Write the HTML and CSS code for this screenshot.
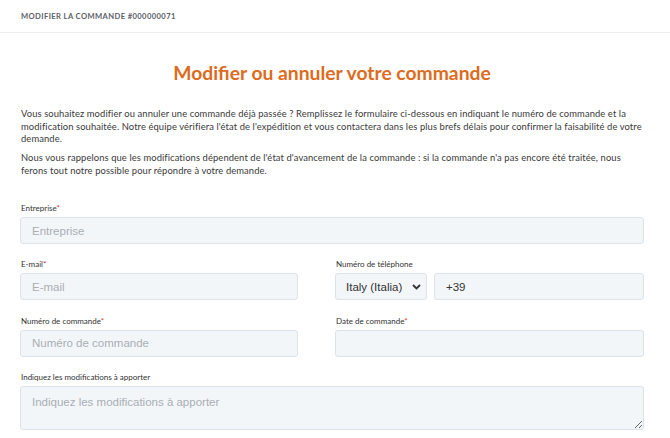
FILE: index.html
```html
<!DOCTYPE html>
<html>

<head>
    <title>Modifier la commande</title>
    <meta charset="utf-8">
    <meta name="viewport" content="width=device-width, initial-scale=1">
    <link rel="stylesheet" href="styles.css">
</head>

<body>
    <div class="topbar">MODIFIER LA COMMANDE #000000071</div>

    <div class="content">
        <h1 class="title">Modifier ou annuler votre commande</h1>

        <p class="intro">Vous souhaitez modifier ou annuler une commande déjà passée ? Remplissez le formulaire ci-dessous en indiquant le numéro de commande et la modification souhaitée. Notre équipe vérifiera l'état de l'expédition et vous contactera dans les plus brefs délais pour confirmer la faisabilité de votre demande.</p>
        <p class="intro">Nous vous rappelons que les modifications dépendent de l'état d'avancement de la commande : si la commande n'a pas encore été traitée, nous ferons tout notre possible pour répondre à votre demande.</p>

        <form class="form">
            <div class="field full">
                <label>Entreprise<span class="req">*</span></label>
                <input type="text" placeholder="Entreprise">
            </div>

            <div class="field">
                <label>E-mail<span class="req">*</span></label>
                <input type="text" placeholder="E-mail">
            </div>
            <div class="field">
                <label>Numéro de téléphone</label>
                <div class="phone">
                    <div class="country">
                        <span>Italy (Italia)</span>
                        <svg width="9" height="6" viewBox="0 0 9 6"><path d="M1 1l3.5 3.5L8 1" fill="none" stroke="#333" stroke-width="1.8"/></svg>
                    </div>
                    <input type="text" value="+39">
                </div>
            </div>

            <div class="field">
                <label>Numéro de commande<span class="req">*</span></label>
                <input type="text" placeholder="Numéro de commande">
            </div>
            <div class="field">
                <label>Date de commande<span class="req">*</span></label>
                <input type="text">
            </div>

            <div class="field full">
                <label>Indiquez les modifications à apporter</label>
                <textarea placeholder="Indiquez les modifications à apporter"></textarea>
            </div>
        </form>
    </div>
</body>

</html>
```

FILE: styles.css
```css
body {
    margin: 0;
    background-color: #FFFFFF;
    font-family: "Lato", "Noto Sans", sans-serif;
    color: #333333;
}

.topbar {
    height: 32px;
    line-height: 32px;
    padding-left: 21px;
    border-bottom: 1px solid #EEEEEE;
    font-size: 7.6px;
    font-weight: bold;
    letter-spacing: 0.4px;
    color: #5C6168;
}

.content {
    width: 624px;
    margin-left: 20px;
}

.title {
    margin: 28px 0 24px;
    text-align: center;
    font-size: 19.3px;
    font-weight: bold;
    color: #DD6B20;
}

.intro {
    margin: 0 0 6.5px 1px;
    font-size: 9.4px;
    line-height: 12.5px;
    letter-spacing: 0.1px;
    color: #3A3A3A;
}

.form {
    display: grid;
    grid-template-columns: 278px 1fr;
    column-gap: 37px;
    row-gap: 15.3px;
    margin-top: 26px;
}

.field {
    display: flex;
    flex-direction: column;
}

.field.full {
    grid-column: 1 / 3;
}

label {
    font-size: 8px;
    margin: 0 0 4px 1px;
    color: #333333;
}

.req {
    color: #D9302C;
}

input,
textarea,
.country {
    box-sizing: border-box;
    height: 27px;
    padding: 0 11px;
    border: 1px solid #DDE3EA;
    border-radius: 3px;
    background-color: #F3F6F9;
    font-family: "Liberation Sans", Arial, sans-serif;
    font-size: 11.5px;
    color: #333333;
    outline: none;
}

input::placeholder,
textarea::placeholder {
    color: #A9AEB4;
}

textarea {
    height: 44px;
    padding-top: 9px;
    resize: vertical;
}

.phone {
    display: flex;
    gap: 7px;
}

.country {
    width: 92px;
    flex: none;
    display: flex;
    align-items: center;
    justify-content: space-between;
    padding: 0 5px 0 10px;
}

.phone input {
    flex: 1;
}
```
